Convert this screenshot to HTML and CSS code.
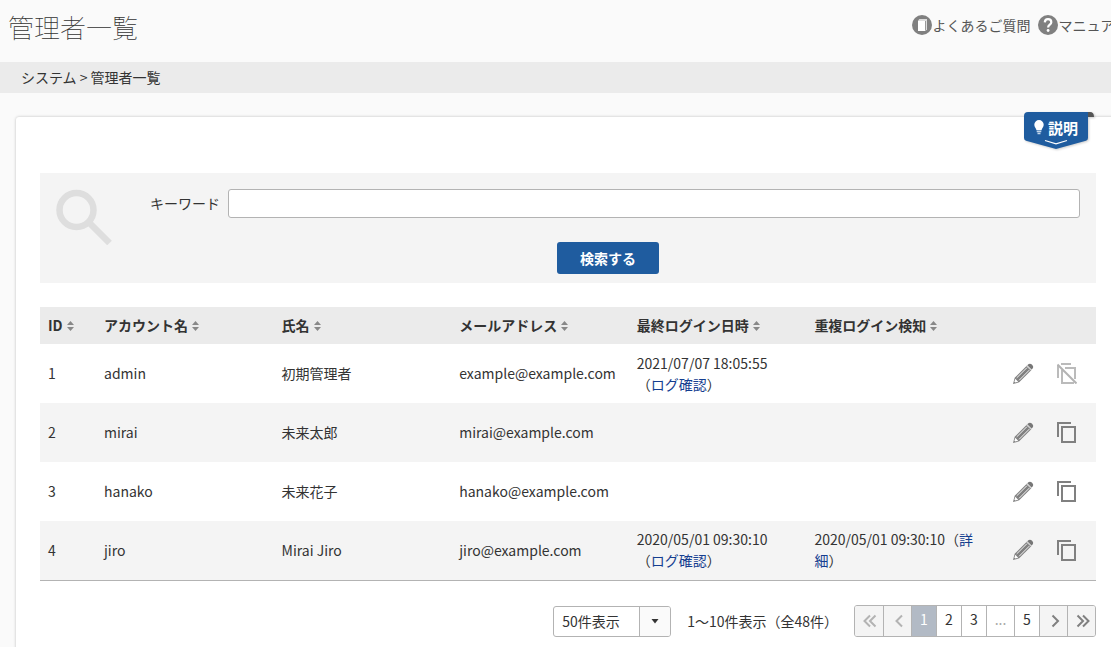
FILE: index.html
```html
<!DOCTYPE html>
<html lang="ja">
<head>
<meta charset="utf-8">
<title>管理者一覧</title>
<link rel="stylesheet" href="styles.css">
</head>
<body>
<svg class="symbols" aria-hidden="true">
  <symbol id="sort" viewBox="0 0 7 10"><path d="M3.500 0L7 4H0zM0 6h7L3.500 10z" fill="#888"/></symbol>
  <symbol id="pencil" viewBox="0 0 22 22">
    <path d="M1 21l1.700-6.200L15 2.500l4.500 4.500L7.200 19.300z" fill="#808080"/>
    <path d="M15.300 2.200l1-1c1.200-1 2.700-.6 3.800.5s1.500 2.600.5 3.800l-1 1z" fill="#777"/>
    <path d="M3.300 15.800l2.900 2.900-2.900.9-.9-.9z" fill="#fff"/>
    <path d="M4.700 14.900L14.900 4.700M7.100 17.300L17.300 7.100" stroke="#fff" stroke-width=".9"/>
    <path d="M14.600 2.900l4.500 4.500" stroke="#fff" stroke-width=".8"/>
  </symbol>
  <symbol id="copy" viewBox="0 0 20 21"><path d="M1 15V1h13M5 5h13v15H5z" fill="none" stroke="#808080" stroke-width="2"/></symbol>
  <symbol id="nocopy" viewBox="0 0 20 21">
    <path d="M1 15V2M4 1h10M5 7v13h12M8 5h10v11" fill="none" stroke="#bbb" stroke-width="2"/>
    <path d="M.5 1.500l19 19" stroke="#b3b3b3" stroke-width="2"/>
  </symbol>
</svg>
<div class="page">
  <header class="header">
    <h1 class="title">管理者一覧</h1>
    <nav class="help">
      <a class="help-link" href="#faq">
        <svg width="20" height="20" viewBox="0 0 20 20"><circle cx="10" cy="10" r="10" fill="#808080"/><path d="M6 5.500L7.500 4h7.500v10.500L13.500 16H6z" fill="#ddd"/><path d="M6 6h7v10H6z" fill="#fff"/><path d="M13.500 6v9.500" stroke="#999"/></svg>
        <span>よくあるご質問</span>
      </a>
      <a class="help-link" href="#manual">
        <svg width="20" height="20" viewBox="0 0 20 20"><circle cx="10" cy="10" r="10" fill="#808080"/><path d="M6.800 7.400C6.900 5.200 8.300 4.200 10 4.200s3.300 1.100 3.300 3c0 2.500-3.200 2.500-3.200 5.400" fill="none" stroke="#fff" stroke-width="2.200"/><circle cx="10.100" cy="15.500" r="1.400" fill="#fff"/></svg>
        <span>マニュアル</span>
      </a>
    </nav>
  </header>
  <nav class="breadcrumb" aria-label="パンくず">システム &gt; 管理者一覧</nav>
  <main class="card">
    <button class="guide" type="button">
      <svg class="guide-shape" width="70" height="37" viewBox="0 0 70 37"><path d="M64 0h2q4 0 4 5h-6z" fill="#555"/><path d="M4 0h60v26q0 2-2 2.700L32 37 2 28.700Q0 28 0 26V4q0-4 4-4z" fill="#1f5c9f"/><path d="M21 28.500l11 3.300 11-3.300" fill="none" stroke="#fff" stroke-width="1.200"/></svg>
      <span class="guide-label"><svg width="10" height="15" viewBox="0 0 10 15"><path d="M5 0a4.700 4.700 0 0 1 4.700 4.700C9.700 7 8 8 7.500 10.200h-5C2 8 .3 7 .3 4.700A4.700 4.700 0 0 1 5 0z" fill="#fff"/><path d="M2.700 11.500h4.600M3.500 13.500h3" stroke="#c4d6ea" stroke-width="1.400"/></svg>説明</span>
    </button>
    <form class="search" role="search">
      <svg class="search-icon" viewBox="0 0 56 56"><circle cx="20.500" cy="21" r="17" fill="none" stroke="#dedede" stroke-width="6.500"/><path d="M33 33.500L53.500 54" stroke="#dedede" stroke-width="6.500"/></svg>
      <div class="search-body">
        <div class="field">
          <label class="field-label" for="keyword">キーワード</label>
          <input class="field-input" id="keyword" type="text">
        </div>
        <button class="submit" type="submit">検索する</button>
      </div>
    </form>
    <table class="list">
      <colgroup><col class="col-id"><col><col><col><col><col><col class="col-actions"></colgroup>
      <thead>
        <tr>
          <th>ID<svg class="sort"><use href="#sort"/></svg></th>
          <th>アカウント名<svg class="sort"><use href="#sort"/></svg></th>
          <th>氏名<svg class="sort"><use href="#sort"/></svg></th>
          <th>メールアドレス<svg class="sort"><use href="#sort"/></svg></th>
          <th>最終ログイン日時<svg class="sort"><use href="#sort"/></svg></th>
          <th>重複ログイン検知<svg class="sort"><use href="#sort"/></svg></th>
          <th></th>
        </tr>
      </thead>
      <tbody>
        <tr>
          <td>1</td><td>admin</td><td>初期管理者</td><td>example@example.com</td>
          <td>2021/07/07 18:05:55<br>（<a href="#log">ログ確認</a>）</td><td></td>
          <td><div class="actions"><button class="icon-button" type="button" aria-label="編集"><svg class="pencil"><use href="#pencil"/></svg></button><button class="icon-button" type="button" aria-label="複製不可" disabled><svg class="copy"><use href="#nocopy"/></svg></button></div></td>
        </tr>
        <tr>
          <td>2</td><td>mirai</td><td>未来太郎</td><td>mirai@example.com</td><td></td><td></td>
          <td><div class="actions"><button class="icon-button" type="button" aria-label="編集"><svg class="pencil"><use href="#pencil"/></svg></button><button class="icon-button" type="button" aria-label="複製"><svg class="copy"><use href="#copy"/></svg></button></div></td>
        </tr>
        <tr>
          <td>3</td><td>hanako</td><td>未来花子</td><td>hanako@example.com</td><td></td><td></td>
          <td><div class="actions"><button class="icon-button" type="button" aria-label="編集"><svg class="pencil"><use href="#pencil"/></svg></button><button class="icon-button" type="button" aria-label="複製"><svg class="copy"><use href="#copy"/></svg></button></div></td>
        </tr>
        <tr>
          <td>4</td><td>jiro</td><td>Mirai Jiro</td><td>jiro@example.com</td>
          <td>2020/05/01 09:30:10<br>（<a href="#log">ログ確認</a>）</td><td>2020/05/01 09:30:10（<a href="#detail">詳細</a>）</td>
          <td><div class="actions"><button class="icon-button" type="button" aria-label="編集"><svg class="pencil"><use href="#pencil"/></svg></button><button class="icon-button" type="button" aria-label="複製"><svg class="copy"><use href="#copy"/></svg></button></div></td>
        </tr>
      </tbody>
    </table>
    <div class="footer">
      <div class="per-page">
        <select class="per-page-select" aria-label="表示件数"><option>50件表示</option></select>
        <span class="per-page-arrow"><svg width="8" height="6" viewBox="0 0 8 6"><path d="M.5 1h7L4 5.500z" fill="#333"/></svg></span>
      </div>
      <p class="range">1〜10件表示（全48件）</p>
      <nav class="pager" aria-label="ページ">
        <button class="step first" type="button" aria-label="最初" disabled><svg width="14" height="14" viewBox="0 0 14 14"><path d="M7 1.500L1.500 7 7 12.500M12.500 1.500L7 7l5.500 5.500"/></svg></button>
        <button class="step" type="button" aria-label="前" disabled><svg width="14" height="14" viewBox="0 0 14 14"><path d="M10 1.500L4.500 7l5.500 5.500"/></svg></button>
        <a class="page-link current" href="#p1" aria-current="page">1</a>
        <a class="page-link" href="#p2">2</a>
        <a class="page-link" href="#p3">3</a>
        <span class="dots">...</span>
        <a class="page-link" href="#p5">5</a>
        <button class="step" type="button" aria-label="次"><svg width="14" height="14" viewBox="0 0 14 14"><path d="M4.500 1.500L10 7l-5.500 5.500"/></svg></button>
        <button class="step" type="button" aria-label="最後"><svg width="14" height="14" viewBox="0 0 14 14"><path d="M1.500 1.500L7 7l-5.500 5.500M7 1.500L12.500 7 7 12.500"/></svg></button>
      </nav>
    </div>
  </main>
</div>
</body>
</html>
```

FILE: styles.css
```css
* { box-sizing: border-box; }
html { overflow-x: hidden; }
body {
  margin: 0;
  background: #fafafa;
  color: #333;
  font: 14px/21px "Noto Sans CJK JP", sans-serif;
}
button, input, select { font: inherit; color: inherit; }
button { cursor: pointer; }
svg { display: block; }
.symbols { display: none; }
.page { min-width: 1136px; }

.header {
  display: flex;
  justify-content: space-between;
  align-items: center;
  padding: 7px 8px 15px;
}
.title { margin: 0; font-size: 26px; line-height: 40px; font-weight: 100; }
.help { display: flex; gap: 8px; padding-bottom: 4px; }
.help-link {
  display: flex;
  align-items: center;
  color: #555;
  text-decoration: none;
}
.breadcrumb { padding: 5px 21px; background: #ebebeb; }

.card {
  position: relative;
  margin: 24px 16px 0;
  padding: 56px 24px 24px;
  background: #fff;
  border-radius: 3px;
  box-shadow: 0 0 3px rgba(0, 0, 0, .25);
}
.guide {
  position: absolute;
  top: -5px;
  right: 26px;
  padding: 0;
  border: 0;
  background: none;
  color: #fff;
  font-weight: 700;
}
.guide-shape { filter: drop-shadow(1px 1px 1px rgba(0, 0, 0, .2)); }
.guide-label {
  position: absolute;
  top: 5px;
  left: 10px;
  display: flex;
  align-items: center;
  gap: 4px;
  font-size: 15px;
  white-space: nowrap;
}

.search {
  display: flex;
  gap: 24px;
  padding: 16px 16px 9px;
  background: #f4f4f4;
}
.search-icon { flex: none; width: 56px; height: 56px; }
.search-body { flex: 1; }
.field { display: flex; align-items: center; gap: 8px; }
.field-label { width: 84px; text-align: right; }
.field-input {
  flex: 1;
  height: 29px;
  padding: 0 8px;
  border: 1px solid #b3b3b3;
  border-radius: 3px;
  background: #fff;
}
.submit {
  display: block;
  margin: 24px auto 0;
  padding: 6px 23px 5px;
  border: 0;
  border-radius: 3px;
  background: #1f5c9f;
  color: #fff;
  font-weight: 700;
}

.list {
  width: 100%;
  margin-top: 24px;
  border-collapse: collapse;
  table-layout: fixed;
  border-bottom: 1px solid #b3b3b3;
}
.col-id { width: 56px; }
.col-actions { width: 112px; }
.list th { padding: 8px; background: #ebebeb; text-align: left; white-space: nowrap; }
.list td { height: 59px; padding: 8px; }
.list tbody tr:nth-child(even) { background: #f4f4f4; }
.list a { color: #153e90; text-decoration: none; }
.sort { display: inline-block; width: 7px; height: 10px; margin-left: 4px; }
.actions { display: flex; justify-content: flex-end; align-items: center; gap: 23px; padding-right: 11px; }
.icon-button { padding: 0; border: 0; background: none; }
.pencil { width: 22px; height: 22px; }
.copy { width: 20px; height: 21px; }

.footer { display: flex; justify-content: flex-end; align-items: flex-end; margin-top: 24px; }
.per-page { position: relative; width: 118px; }
.per-page-select {
  display: block;
  width: 100%;
  height: 31px;
  padding: 0 40px 0 8px;
  border: 1px solid #b3b3b3;
  border-radius: 3px;
  background: #fff;
  appearance: none;
}
.per-page-arrow {
  position: absolute;
  top: 1px;
  right: 1px;
  bottom: 1px;
  width: 31px;
  display: grid;
  place-items: center;
  border-left: 1px solid #b3b3b3;
  border-radius: 0 2px 2px 0;
  background: #fafafa;
  pointer-events: none;
}
.range { margin: 0 16px; padding-bottom: 5px; }
.pager {
  display: flex;
  height: 32px;
  border: 1px solid #b3b3b3;
  border-radius: 3px;
  overflow: hidden;
}
.pager > * { width: 25px; text-align: center; line-height: 27px; }
.pager > * + * { border-left: 1px solid #b3b3b3; }
.pager .step {
  width: 28px;
  display: grid;
  place-items: center;
  padding: 1px 0 0 2px;
  border-width: 0 0 0 1px;
  background: #f4f4f4;
}
.pager .first { border-left: 0; }
.step path { fill: none; stroke: #808080; stroke-width: 2; }
.step:disabled path { stroke: #b3b3b3; }
.page-link { color: #333; text-decoration: none; }
.pager .current { background: #b2bac5; color: #fff; }
.pager .dots { width: 28px; color: #aaa; }
```
